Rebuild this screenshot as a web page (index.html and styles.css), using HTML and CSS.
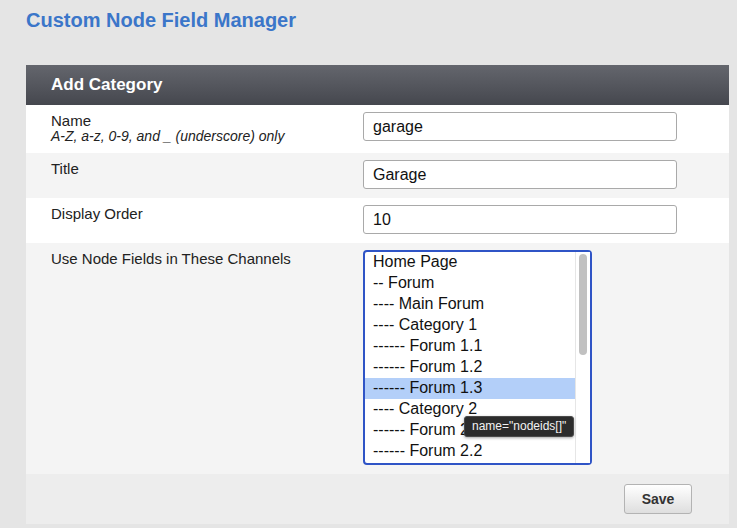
FILE: index.html
```html
<!DOCTYPE html>
<html>
<head>
<meta charset="utf-8">
<link rel="stylesheet" href="styles.css">
</head>
<body>
<div class="page">
  <h1 class="page-title">Custom Node Field Manager</h1>
  <div class="panel">
    <div class="panel-head">Add Category</div>
    <div class="row">
      <div class="label">Name<span class="desc">A-Z, a-z, 0-9, and _ (underscore) only</span></div>
      <div class="field"><input class="text-input" type="text" value="garage"></div>
    </div>
    <div class="row alt">
      <div class="label">Title</div>
      <div class="field"><input class="text-input" type="text" value="Garage"></div>
    </div>
    <div class="row">
      <div class="label">Display Order</div>
      <div class="field"><input class="text-input" type="text" value="10"></div>
    </div>
    <div class="row alt">
      <div class="label">Use Node Fields in These Channels</div>
      <div class="field">
        <div class="listbox">
          <div class="options">
            <div class="option">Home Page</div>
            <div class="option">-- Forum</div>
            <div class="option">---- Main Forum</div>
            <div class="option">---- Category 1</div>
            <div class="option">------ Forum 1.1</div>
            <div class="option">------ Forum 1.2</div>
            <div class="option selected">------ Forum 1.3</div>
            <div class="option">---- Category 2</div>
            <div class="option">------ Forum 2.1</div>
            <div class="option">------ Forum 2.2</div>
          </div>
          <div class="scrollbar"><div class="thumb"></div></div>
          <div class="tooltip">name="nodeids[]"</div>
        </div>
      </div>
    </div>
    <div class="footer">
      <button class="btn" type="button">Save</button>
    </div>
  </div>
</div>
</body>
</html>
```

FILE: styles.css
```css
html, body {
  margin: 0;
  padding: 0;
  background: #e5e5e5;
  font-family: "Liberation Sans", Arial, Helvetica, sans-serif;
  color: #222;
}

.page {
  padding: 9px 8px 0 26px;
}

.page-title {
  margin: 0 0 33px 0;
  font-size: 20px;
  line-height: 23px;
  font-weight: bold;
  color: #3b76c9;
}

.panel {
  width: 703px;
  background: #fff;
}

.panel-head {
  height: 40px;
  line-height: 40px;
  padding-left: 25px;
  font-size: 17px;
  font-weight: bold;
  color: #fff;
  background: linear-gradient(#64666d, #45474e);
}

.row {
  display: grid;
  grid-template-columns: 312px 1fr;
  padding: 7px 0 9px 25px;
  background: #fff;
}

.row.alt {
  background: #f4f4f4;
}

.label {
  font-size: 15px;
  line-height: 16px;
  padding-top: 1px;
}

.desc {
  display: block;
  font-size: 14px;
  font-style: italic;
  line-height: 15px;
}

.field {
  display: flex;
  align-items: flex-start;
}

.text-input {
  box-sizing: border-box;
  width: 314px;
  height: 29px;
  margin: 0;
  padding: 0 9px;
  border: 1px solid #a9a9a9;
  border-radius: 3px;
  background: #fff;
  font-family: "Liberation Sans", Arial, Helvetica, sans-serif;
  font-size: 16px;
  color: #111;
}

.listbox {
  position: relative;
  box-sizing: border-box;
  width: 229px;
  height: 215px;
  border: 2px solid #2f54c6;
  border-radius: 4px;
  background: #fff;
  display: flex;
}

.options {
  width: 210px;
  height: 211px;
  overflow: hidden;
}

.option {
  font-size: 16px;
  line-height: 20px;
  padding: 0 0 1px 8px;
  color: #111;
  white-space: nowrap;
}

.option.selected {
  background: #b3cff9;
}

.scrollbar {
  width: 14px;
  border-left: 1px solid #e6e6e6;
  background: #fff;
  position: relative;
}

.thumb {
  position: absolute;
  left: 3px;
  top: 2px;
  width: 8px;
  height: 101px;
  border-radius: 4px;
  background: #c1c1c1;
}

.tooltip {
  position: absolute;
  left: 99px;
  top: 164px;
  height: 19px;
  line-height: 19px;
  padding: 0 7px;
  font-size: 12px;
  color: #f2f2f2;
  background: #2c2c2c;
  border: 1px solid #4a4a4a;
  border-radius: 3px;
  white-space: nowrap;
  box-shadow: 0 1px 3px rgba(0,0,0,0.35);
}

.footer {
  display: flex;
  justify-content: flex-end;
  padding: 10px 37px 10px 0;
  background: #ededed;
}

.btn {
  box-sizing: border-box;
  width: 68px;
  height: 30px;
  margin: 0;
  border: 1px solid #b3b3b3;
  border-radius: 3px;
  background: linear-gradient(#ffffff, #dedede);
  font-family: "Liberation Sans", Arial, Helvetica, sans-serif;
  font-size: 14px;
  font-weight: bold;
  color: #333;
}
```
